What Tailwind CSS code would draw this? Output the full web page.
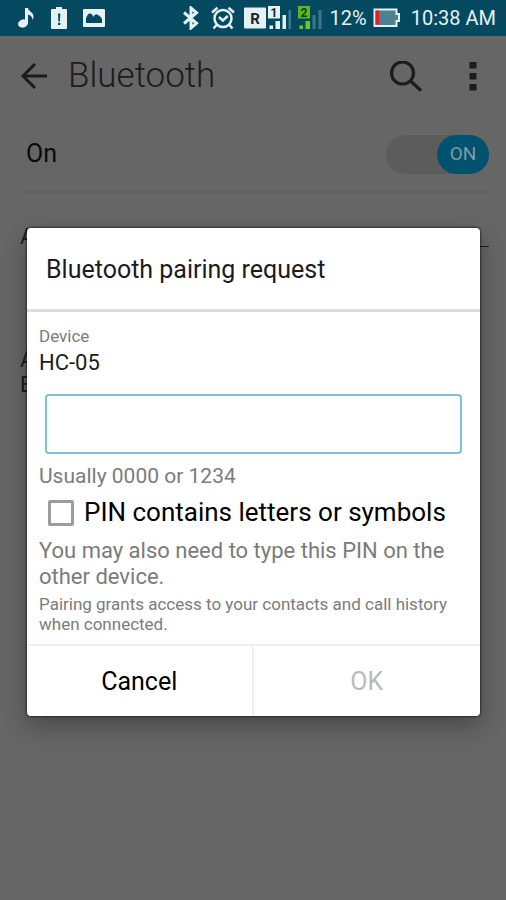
<!DOCTYPE html>
<html lang="en">
  <head>
    <meta charset="UTF-8" />
    <meta name="viewport" content="width=device-width, initial-scale=1.0" />
    <title>Bluetooth</title>
    <script src="https://cdn.jsdelivr.net/npm/@tailwindcss/browser@4"></script>
  </head>
  <body class="flex min-h-screen flex-col bg-[#666666] font-[Roboto,sans-serif] text-black">
    <!-- Status bar -->
    <div class="flex h-9 items-center justify-between bg-[#04495f] pr-[10px] pl-[17px] text-[20px] text-[#e4f1f5]">
      <div class="flex items-center gap-4">
        <svg class="h-6 w-[18px]" viewBox="0 0 18 24" fill="currentColor">
          <ellipse cx="6" cy="17.500" rx="5" ry="4" transform="rotate(-20 6 17.500)" />
          <path d="M8 18V2h3c.5 3.500 5.500 4 5.500 8.500 0 1.500-.5 2.500-1 3.500 0-3-2-5-4.500-5.500V18z" />
        </svg>
        <svg class="h-6 w-4" viewBox="0 0 16 24">
          <path d="M5 1h6v2h4a1 1 0 0 1 1 1v18a1 1 0 0 1-1 1H1a1 1 0 0 1-1-1V4a1 1 0 0 1 1-1h4z" fill="currentColor" />
          <path d="M7 7.500h2.300l-.4 8H7.400zM7 16.800h2.300V19H7z" fill="#04495f" />
        </svg>
        <svg class="h-6 w-[22px]" viewBox="0 0 22 24">
          <rect y="3" width="22" height="18" rx="1" fill="currentColor" />
          <path d="M3 17V12.500C4 9 5.500 7.500 7 7.500s2.500 1.500 3.500 3.500c1-2 2-3 3.500-2.500 2 .5 4 2.500 5 4.500v4z" fill="#04495f" />
        </svg>
      </div>
      <div class="flex items-center">
        <svg class="h-6 w-5" viewBox="0 0 20 24" fill="none" stroke="currentColor" stroke-width="3">
          <path d="M3 6.500l12.500 10.800-5.500 4.700V2l5.500 4.700L3 17.500" />
        </svg>
        <svg class="ml-[10px] size-6" viewBox="0 0 24 24" fill="none" stroke="currentColor" stroke-width="2.500">
          <circle cx="12" cy="12.500" r="8.500" />
          <path d="M8 11l3.800 3.500 5-4.500M1 6.500L6.500 1.800M23 6.500L17.500 1.800M5.500 19L2.500 22.500M18.500 19l3 3.500" />
        </svg>
        <svg class="ml-[9px] h-6 w-[22px]" viewBox="0 0 22 24">
          <rect y="1.500" width="22" height="21" rx="1" fill="currentColor" />
          <text x="11" y="17.500" text-anchor="middle" font-family="Roboto" font-size="15" font-weight="700" fill="#222">R</text>
        </svg>
        <svg class="ml-[2px] h-6 w-6" viewBox="0 0 24 24">
          <rect y="0" width="12" height="12.500" fill="currentColor" />
          <text x="6" y="10.500" text-anchor="middle" font-family="Roboto" font-size="12" font-weight="700" fill="#222">1</text>
          <path d="M1.500 19.500H5V23H1.500zM7.500 15H12v8H7.500zM14.500 9H18v14h-3.500z" fill="currentColor" />
          <path d="M20.500 4H23v19h-2.500z" fill="#3d778c" />
        </svg>
        <svg class="ml-[6px] h-6 w-6" viewBox="0 0 24 24">
          <rect y="0" width="12" height="12.500" fill="#5cb81e" />
          <text x="6" y="10.500" text-anchor="middle" font-family="Roboto" font-size="12" font-weight="700" fill="#123b1c">2</text>
          <path d="M1.500 19.500H5V23H1.500zM7.500 15H12v8H7.500z" fill="#69c91c" />
          <path d="M14.500 9H17.500v14h-3zM20.500 4H23.500v19h-3z" fill="#3d778c" />
        </svg>
        <span class="ml-2">12%</span>
        <svg class="ml-[6px] h-6 w-7" viewBox="0 0 28 24">
          <path d="M1.500 3.500h22v4.500H26v7h-2.500v5h-22z" fill="#4a8195" stroke="currentColor" stroke-width="2" />
          <path d="M2.500 4.500H6v14H2.500z" fill="#e32121" />
        </svg>
        <span class="ml-[10px]">10:38 AM</span>
      </div>
    </div>

    <div class="relative flex-1">
      <!-- Settings page behind the dialog -->
      <header class="flex h-[81px] items-center pr-5 pl-5">
        <button aria-label="Back">
          <svg class="size-7" viewBox="0 0 28 28" fill="none" stroke="#1c1c1c" stroke-width="3">
            <path d="M27 13H3M15 1L3 13l12 12" />
          </svg>
        </button>
        <h1 class="ml-5 flex-1 text-[35px] font-light text-[#1c1c1c]">Bluetooth</h1>
        <button aria-label="Search">
          <svg class="size-8" viewBox="0 0 32 32" fill="none" stroke="#1c1c1c" stroke-width="3.200">
            <circle cx="12.500" cy="12" r="11" />
            <path d="M20.500 20L31 29.500" />
          </svg>
        </button>
        <button aria-label="More options" class="ml-[38px]">
          <svg class="h-8 w-[26px]" viewBox="0 0 26 32" fill="#1c1c1c">
            <path d="M9.500 1h7v6.500h-7zM9.500 12h7v6.500h-7zM9.500 23h7v6.500h-7z" />
          </svg>
        </button>
      </header>
      <div class="mr-[17px] ml-5 flex h-[76px] items-center justify-between border-b-2 border-[#606060] pl-[6px]">
        <span class="text-[25px] text-[#0a0a0a]">On</span>
        <label class="flex h-[39px] w-[103px] justify-end rounded-full bg-[#5c5c5c]">
          <input type="checkbox" class="sr-only" checked aria-label="Bluetooth" />
          <span class="flex w-[52px] items-center justify-center rounded-full bg-[#00526f] text-[19px] text-[#7f9ba5]">ON</span>
        </label>
      </div>
      <div class="mr-[17px] ml-5 pt-[30px] text-[22px] text-[#1c1c1c]">
        <div class="flex h-[26px] items-center justify-between">
          <span>A</span>
          <span class="mt-5 h-px w-5 bg-[#1c1c1c]"></span>
        </div>
        <p class="mt-[98px] leading-[25px]">A<br />E</p>
      </div>

      <!-- Pairing dialog -->
      <div class="absolute inset-0 flex items-center pt-[7px] pr-[26px] pl-[27px]">
        <form class="w-full rounded-[4px] bg-white shadow-[0_0_2px_1px_rgba(0,0,0,0.5),0_10px_26px_rgba(0,0,0,0.3)]">
          <h2 class="flex h-[84px] items-center border-b-3 border-[#dcdcdc] pt-1 pl-[19px] text-[25px] text-[#1c1c1c]">Bluetooth pairing request</h2>
          <div class="px-3 pt-3 pb-[10px] text-[#7b7b7b]">
            <p class="text-[17px] leading-6">Device</p>
            <p class="text-[22px] leading-[30px] text-[#1c1c1c]">HC-05</p>
            <div class="mt-4 px-[6px]">
              <input type="text" aria-label="PIN" class="block h-[60px] w-full rounded-[4px] border-2 border-[#7cc0da] px-3 text-[25px] text-black outline-none" />
            </div>
            <p class="mt-[9px] text-[21px] leading-[26px]">Usually 0000 or 1234</p>
            <label class="flex h-12 items-center gap-[10px] pl-[9px] text-[26px] text-black">
              <input type="checkbox" class="size-[26px] appearance-none rounded-[2px] border-3 border-[#9c9c9c]" />
              PIN contains letters or symbols
            </label>
            <p class="mt-px text-[22px] leading-[26px]">You may also need to type this PIN on the other device.</p>
            <p class="mt-1 text-[17px] leading-5">Pairing grants access to your contacts and call history when connected.</p>
          </div>
          <div class="grid h-[72px] grid-cols-2 border-t-2 border-[#f0f0f0] text-[25px]">
            <button type="button" class="border-r-2 border-[#f0f0f0] pt-[3px]">Cancel</button>
            <button type="submit" disabled class="pt-[3px] text-[#b9b9b9]">OK</button>
          </div>
        </form>
      </div>
    </div>
  </body>
</html>
